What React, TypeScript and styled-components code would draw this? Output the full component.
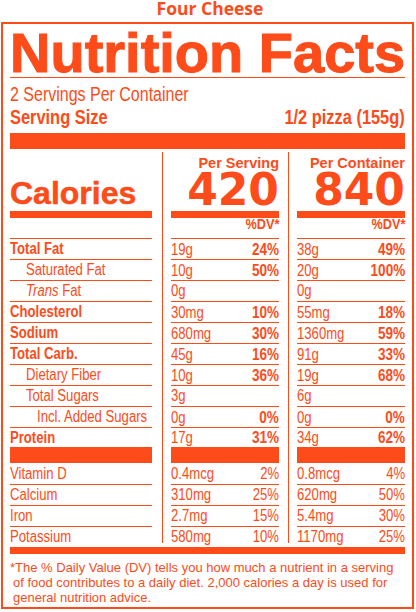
import React from 'react';
import styled, { createGlobalStyle } from 'styled-components';

const C = '#fd4b1a';
const SANS = '"Liberation Sans", Arial, sans-serif';

const Global = createGlobalStyle`
  html, body { margin: 0; padding: 0; background: #fff; }
  body { color: ${C}; font-family: ${SANS}; }
`;

const Page = styled.div`
  width: 416px;
  height: 612px;
  overflow: hidden;
`;

const Title = styled.div`
  height: 16px;
  margin-bottom: 6px;
  text-align: center;
  font-family: "Open Sans", sans-serif;
  font-weight: 700;
  font-size: 17.5px;
  line-height: 16px;
  padding-left: 4px;
`;

const Panel = styled.div`
  box-sizing: border-box;
  margin-left: 1px;
  width: 413px;
  border: 2px solid ${C};
  padding: 4px 7px 2px 7px;
`;

const Heading = styled.h1`
  margin: 0;
  font-family: ${SANS};
  font-weight: 700;
  font-size: 56px;
  line-height: 49px;
  white-space: nowrap;
  -webkit-text-stroke: 1px ${C};
  border-bottom: 1px solid ${C};
`;

/* Condensed text: Liberation Sans narrowed to Arial Narrow proportions */
const Cond = styled.span<{ $right?: boolean; $bold?: boolean; $size: number; $indent?: number }>`
  display: inline-block;
  white-space: nowrap;
  font-family: ${SANS};
  font-size: ${(p) => p.$size}px;
  font-weight: ${(p) => (p.$bold ? 700 : 400)};
  margin-left: ${(p) => p.$indent ?? 0}px;
  transform: scaleX(0.82);
  transform-origin: ${(p) => (p.$right ? 'right' : 'left')} center;
`;

const Servings = styled.div`
  margin-top: 5px;
  line-height: 22px;
  height: 22px;
`;

const ServingSize = styled.div`
  margin-top: 1px;
  height: 22px;
  line-height: 22px;
  display: flex;
  justify-content: space-between;
`;

const Bar = styled.div<{ $h: number; $mt?: number }>`
  height: ${(p) => p.$h}px;
  margin-top: ${(p) => p.$mt ?? 0}px;
  background: ${C};
  flex-shrink: 0;
`;

const Section = styled.div`
  display: flex;
`;

const Column = styled.div<{ $w: number }>`
  width: ${(p) => p.$w}px;
  display: flex;
  flex-direction: column;
`;

const Divider = styled.div<{ $ml: number; $mr: number }>`
  width: 1px;
  background: ${C};
  margin: 3px ${(p) => p.$mr}px 4px ${(p) => p.$ml}px;
`;

const Header = styled.div<{ $right?: boolean; $pb: number }>`
  height: 62px;
  box-sizing: border-box;
  padding-bottom: ${(p) => p.$pb}px;
  display: flex;
  flex-direction: column;
  justify-content: flex-end;
  align-items: ${(p) => (p.$right ? 'flex-end' : 'flex-start')};
`;

const CaloriesLabel = styled.div`
  font-family: ${SANS};
  font-weight: 700;
  font-size: 32px;
  line-height: 32px;
  -webkit-text-stroke: 0.5px ${C};
`;

const PerLabel = styled.div`
  font-family: ${SANS};
  font-weight: 700;
  font-size: 14.5px;
  line-height: 16px;
`;

const BigNumber = styled.div`
  font-family: "DejaVu Sans", sans-serif;
  font-weight: 700;
  font-size: 44px;
  line-height: 37px;
`;

const DVHead = styled.div`
  height: 20px;
  border-bottom: 1px solid ${C};
  text-align: right;
  line-height: 12px;
`;

const Row = styled.div<{ $h: number; $line: boolean }>`
  height: ${(p) => p.$h}px;
  line-height: ${(p) => p.$h}px;
  border-bottom: ${(p) => (p.$line ? `1px solid ${C}` : 'none')};
  display: flex;
  justify-content: space-between;
  align-items: baseline;
`;

const Footnote = styled.p`
  margin: 0;
  padding: 6px 0 0 3px;
  text-indent: -3px;
  font-family: ${SANS};
  font-size: 13px;
  line-height: 15px;
`;

type Nutrient = {
  label: React.ReactNode;
  bold?: boolean;
  indent: number;
  s: [string, string];
  c: [string, string];
};

const nutrients: Nutrient[] = [
  { label: 'Total Fat', bold: true, indent: 0, s: ['19g', '24%'], c: ['38g', '49%'] },
  { label: 'Saturated Fat', indent: 16, s: ['10g', '50%'], c: ['20g', '100%'] },
  { label: <><i>Trans</i> Fat</>, indent: 16, s: ['0g', ''], c: ['0g', ''] },
  { label: 'Cholesterol', bold: true, indent: 0, s: ['30mg', '10%'], c: ['55mg', '18%'] },
  { label: 'Sodium', bold: true, indent: 0, s: ['680mg', '30%'], c: ['1360mg', '59%'] },
  { label: 'Total Carb.', bold: true, indent: 0, s: ['45g', '16%'], c: ['91g', '33%'] },
  { label: 'Dietary Fiber', indent: 16, s: ['10g', '36%'], c: ['19g', '68%'] },
  { label: 'Total Sugars', indent: 16, s: ['3g', ''], c: ['6g', ''] },
  { label: 'Incl. Added Sugars', indent: 27, s: ['0g', '0%'], c: ['0g', '0%'] },
  { label: 'Protein', bold: true, indent: 0, s: ['17g', '31%'], c: ['34g', '62%'] },
];

const vitamins: { label: string; s: [string, string]; c: [string, string] }[] = [
  { label: 'Vitamin D', s: ['0.4mcg', '2%'], c: ['0.8mcg', '4%'] },
  { label: 'Calcium', s: ['310mg', '25%'], c: ['620mg', '50%'] },
  { label: 'Iron', s: ['2.7mg', '15%'], c: ['5.4mg', '30%'] },
  { label: 'Potassium', s: ['580mg', '10%'], c: ['1170mg', '25%'] },
];

const nutH = (i: number) => (i === nutrients.length - 1 ? 19 : 20);
const nutLine = (i: number) => i !== nutrients.length - 1;
const vitH = (i: number) => (i === 0 ? 21 : 20);
const vitLine = (i: number) => i !== vitamins.length - 1;

function ValueColumn({ title, total, pick }: { title: string; total: string; pick: 's' | 'c' }) {
  return (
    <Column $w={108}>
      <Header $right $pb={3}>
        <PerLabel>{title}</PerLabel>
        <BigNumber>{total}</BigNumber>
      </Header>
      <Bar $h={7} />
      <DVHead>
        <Cond $right $bold $size={15.5}>%DV*</Cond>
      </DVHead>
      {nutrients.map((n, i) => (
        <Row key={i} $h={nutH(i)} $line={nutLine(i)}>
          <Cond $size={16}>{n[pick][0]}</Cond>
          <Cond $right $bold $size={16.5}>{n[pick][1]}</Cond>
        </Row>
      ))}
      <Bar $h={16} />
      {vitamins.map((v, i) => (
        <Row key={i} $h={vitH(i)} $line={vitLine(i)}>
          <Cond $size={16}>{v[pick][0]}</Cond>
          <Cond $right $size={16}>{v[pick][1]}</Cond>
        </Row>
      ))}
    </Column>
  );
}

export default function App() {
  return (
    <Page>
      <Global />
      <Title>Four Cheese</Title>
      <Panel>
        <Heading>Nutrition Facts</Heading>
        <Servings>
          <Cond $size={19.5}>2 Servings Per Container</Cond>
        </Servings>
        <ServingSize>
          <Cond $bold $size={20}>Serving Size</Cond>
          <Cond $right $bold $size={20}>1/2 pizza (155g)</Cond>
        </ServingSize>
        <Bar $h={16} $mt={5} />
        <Section>
          <Column $w={142}>
            <Header $pb={2}>
              <CaloriesLabel>Calories</CaloriesLabel>
            </Header>
            <Bar $h={7} />
            <DVHead />
            {nutrients.map((n, i) => (
              <Row key={i} $h={nutH(i)} $line={nutLine(i)}>
                <Cond $bold={n.bold} $indent={n.indent} $size={16}>{n.label}</Cond>
              </Row>
            ))}
            <Bar $h={16} />
            {vitamins.map((v, i) => (
              <Row key={i} $h={vitH(i)} $line={vitLine(i)}>
                <Cond $size={16}>{v.label}</Cond>
              </Row>
            ))}
          </Column>
          <Divider $ml={10} $mr={8} />
          <ValueColumn title="Per Serving" total="420" pick="s" />
          <Divider $ml={9} $mr={8} />
          <ValueColumn title="Per Container" total="840" pick="c" />
        </Section>
        <Bar $h={7} />
        <Footnote>
          *The % Daily Value (DV) tells you how much a nutrient in a serving of food contributes to a daily
          diet. 2,000 calories a day is used for general nutrition advice.
        </Footnote>
      </Panel>
    </Page>
  );
}
